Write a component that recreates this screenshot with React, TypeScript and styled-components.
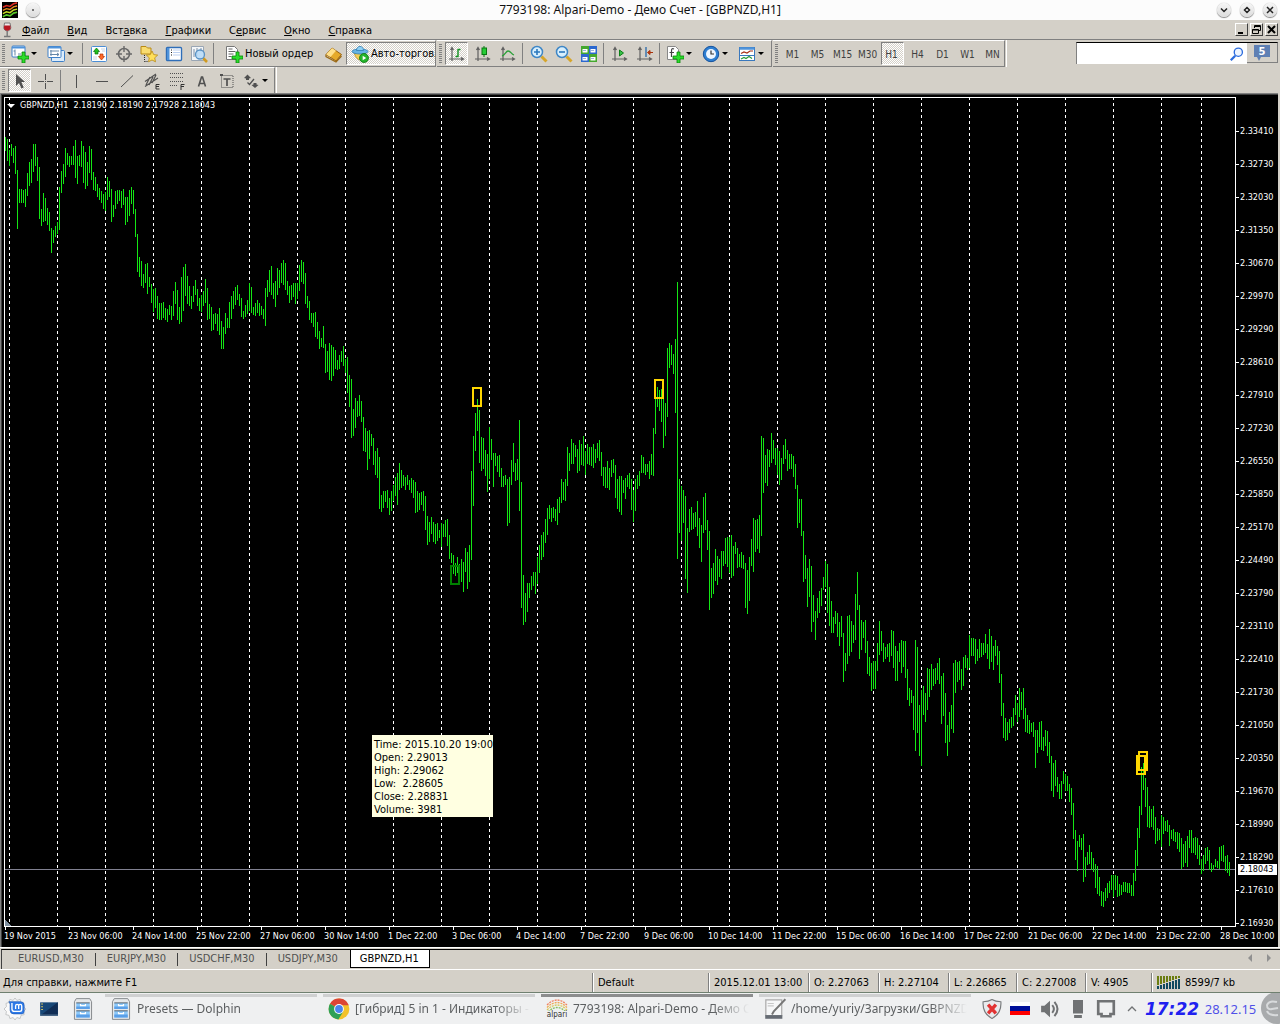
import React, { ReactNode } from "react";
import styled, { createGlobalStyle, css } from "styled-components";

const FACE = "#d4d0c8";
const SHADOW = "#808080";
const UI_FONT = '"DejaVu Sans Condensed", "DejaVu Sans", sans-serif';
const DESKTOP_FONT = '"Noto Sans", sans-serif';

const GlobalStyle = createGlobalStyle`
  * { box-sizing: border-box; }
  body { margin: 0; background: #000; }
  button, input { font: inherit; color: inherit; margin: 0; padding: 0; border: 0; background: none; }
  button { cursor: pointer; }
  svg { display: block; flex: none; }
`;

/* ---------- window frame ---------- */

const Screen = styled.div`
  display: flex;
  flex-direction: column;
  min-height: 100vh;
  font: 11px/14px ${UI_FONT};
  color: #000;
  background: ${FACE};
`;

const TitleBar = styled.header`
  display: grid;
  grid-template-columns: 1fr auto 1fr;
  align-items: center;
  height: 20px;
  background: #fcfcfc;
`;

const TitleSide = styled.div<{ $end?: boolean }>`
  display: flex;
  align-items: center;
  gap: ${(p) => (p.$end ? 9 : 8)}px;
  justify-content: ${(p) => (p.$end ? "flex-end" : "flex-start")};
  padding: 0 ${(p) => (p.$end ? 3 : 2)}px;
`;

const Title = styled.h1`
  margin: 0;
  font: 12px/20px ${DESKTOP_FONT};
  color: #111;
`;

const RoundButton = styled.button`
  display: grid;
  place-items: center;
  width: 14px;
  height: 14px;
  border-radius: 50%;
  background: linear-gradient(#f6f6f6, #dcdcdc);
  box-shadow: 0 1px 1px #888, 0 0 1px #999;
`;

const MenuBar = styled.nav`
  display: flex;
  align-items: center;
  height: 20px;
  padding: 0 2px 0 1px;
  border-bottom: 1px solid ${SHADOW};
`;

const MenuItem = styled.button`
  height: 19px;
  padding: 3px 9px 0;
  line-height: 16px;
`;

const MdiButtons = styled.div`
  display: flex;
  gap: 2px;
  margin-left: auto;
`;

const MdiButton = styled.button`
  display: grid;
  place-items: center;
  width: 13px;
  height: 13px;
  background: ${FACE};
  border: 1px solid;
  border-color: #fff #404040 #404040 #fff;
`;

/* ---------- toolbars ---------- */

const ToolRow = styled.div<{ $last?: boolean }>`
  display: flex;
  height: ${(p) => (p.$last ? 26 : 27)}px;
`;

const Band = styled.div<{ $width?: number; $last?: boolean }>`
  display: flex;
  align-items: center;
  flex: none;
  width: ${(p) => (p.$width ? p.$width + "px" : "auto")};
  overflow: hidden;
  border-top: 1px solid #fff;
  border-bottom: ${(p) => (p.$last ? 0 : 1)}px solid ${SHADOW};
  border-right: 1px solid ${SHADOW};
  margin-right: 1px;
`;

const RowFill = styled.div`
  flex: 1;
  display: flex;
  justify-content: flex-end;
  padding: 2px 2px 0 0;
  border-left: 1px solid #fff;
`;

const Grip = styled.span`
  flex: none;
  width: 3px;
  height: 19px;
  margin: 0 3px 0 2px;
  background: repeating-linear-gradient(#808080 0 1px, transparent 1px 2px);
`;

const Rule = styled.span`
  flex: none;
  width: 1px;
  height: 21px;
  margin: 0 3px 0 2px;
  background: ${SHADOW};
`;

const ToolButton = styled.button<{ $pressed?: boolean; $wide?: boolean }>`
  flex: none;
  display: flex;
  align-items: center;
  justify-content: center;
  gap: 2px;
  width: ${(p) => (p.$wide ? 36 : 25)}px;
  height: 23px;
  padding-right: ${(p) => (p.$wide ? 4 : 0)}px;
  border: 1px solid transparent;
  ${(p) =>
    p.$pressed &&
    css`
      width: 23px;
      margin: 0 2px 0 0;
      border-color: ${SHADOW} #fff #fff ${SHADOW};
      background: repeating-conic-gradient(#fff 0 25%, ${FACE} 0 50%) 0 0 / 2px 2px;
    `}
`;

const LabelButton = styled(ToolButton)<{ $size: number }>`
  justify-content: flex-start;
  width: ${(p) => p.$size}px;
  padding-left: ${(p) => (p.$pressed ? 4 : 7)}px;
  white-space: nowrap;
  overflow: hidden;
  margin-right: 0;
`;

const Period = styled(ToolButton)`
  padding: 2px 2px 0 0;
  font: 10px/14px ${UI_FONT};
  color: #404040;
`;

const Caret = styled.i`
  border: 3px solid transparent;
  border-top-color: #000;
  border-bottom: 0;
`;

const SearchBox = styled.label`
  display: flex;
  align-items: center;
  width: 171px;
  height: 22px;
  padding-right: 2px;
  background: #fff;
  border-top: 1px solid #000;
  border-left: 1px solid ${SHADOW};
`;

const SearchInput = styled.input`
  flex: 1;
  min-width: 0;
  padding: 0 4px;
  outline: 0;
`;

const ChatButton = styled.button`
  display: grid;
  place-items: center;
  width: 31px;
  height: 21px;
  border-top: 1px solid #000;
  border-right: 1px solid ${SHADOW};
  border-bottom: 1px solid ${SHADOW};
`;

/* ---------- chart ---------- */

const ChartWindow = styled.main`
  flex: 1;
  display: flex;
  flex-direction: column;
  margin-right: 2px;
  padding: 2px 0 0 2px;
  background: #000;
  border-top: 1px solid ${SHADOW};
  border-left: 1px solid ${SHADOW};
  box-shadow: inset 1px 1px #404040;
`;

const PlotRow = styled.div`
  flex: 1;
  display: flex;
  min-height: 600px;
  padding: 1px 0 0 1px;
`;

const Plot = styled.section`
  position: relative;
  flex: 1;
  min-width: 0;
  border: 1px solid #fff;
`;

const Drawing = styled.svg`
  position: absolute;
  inset: 0;
  width: 100%;
  height: 100%;
  shape-rendering: crispEdges;
`;

const Quote = styled.div`
  position: absolute;
  top: 2px;
  left: 2px;
  display: flex;
  align-items: center;
  gap: 5px;
  font: 9px/11px ${UI_FONT};
  white-space: pre;
  color: #fff;
`;

const QuoteMark = styled.i`
  border: 4px solid transparent;
  border-top-color: #fff;
  border-bottom: 0;
`;

const Hint = styled.div`
  position: absolute;
  top: 637px;
  left: 367px;
  padding: 3px 0 1px 2px;
  background: #ffffe1;
  font: 11px/13px ${UI_FONT};
  white-space: pre;
`;

const PriceAxis = styled.div`
  position: relative;
  flex: none;
  width: 42px;
  padding-top: 18px;
  margin-bottom: -13px;
  font: 9px/33px ${UI_FONT};
  color: #fff;
`;

const Price = styled.div`
  display: flex;
  align-items: center;
  gap: 1px;
  height: 33px;
  &::before { content: ""; width: 3px; height: 1px; background: #fff; }
`;

const LastPrice = styled.div`
  position: absolute;
  top: 767px;
  left: 2px;
  width: 39px;
  padding-left: 2px;
  background: #fff;
  color: #000;
  line-height: 11px;
`;

const TimeAxis = styled.div`
  display: flex;
  height: 20px;
  padding-left: 1px;
  overflow: hidden;
`;

const Moment = styled.div`
  flex: none;
  width: 64px;
  font: 9px/13px ${UI_FONT};
  color: #fff;
  white-space: nowrap;
  &::before { content: ""; display: block; width: 1px; height: 3px; margin-left: 1px; background: #fff; }
`;

/* ---------- tabs and status ---------- */

const TabStrip = styled.div`
  display: flex;
  height: 23px;
  border-top: 1px solid #fff;
  border-bottom: 1px solid #fff;
`;

const Tabs = styled.div`
  display: flex;
  flex: 1;
  margin: 1px 0 0 1px;
  padding-left: 5px;
  border-top: 1px solid #000;
  border-left: 1px solid #404040;
`;

const Tab = styled.button<{ $active?: boolean; $ruled?: boolean }>`
  position: relative;
  height: 18px;
  padding: 0 12px 0 11px;
  color: #505050;
  ${(p) =>
    p.$ruled &&
    css`
      &::after { content: ""; position: absolute; right: 0; top: 3px; width: 1px; height: 13px; background: #404040; }
    `}
  ${(p) =>
    p.$active &&
    css`
      padding: 0 10px 0 9px;
      color: #000;
      background: #fff;
      border: 1px solid #000;
      border-top: 0;
    `}
`;

const TabArrows = styled.div`
  display: flex;
  align-items: center;
  gap: 15px;
  margin-left: auto;
  padding: 0 9px 3px 0;
`;

const Arrow = styled.button<{ $left?: boolean }>`
  border: 4px solid transparent;
  border-${(p) => (p.$left ? "right" : "left")}-color: #909090;
  border-${(p) => (p.$left ? "left" : "right")}: 0;
`;

const StatusBar = styled.footer`
  display: flex;
  align-items: stretch;
  height: 23px;
  padding-top: 3px;
  border-bottom: 1px solid #6f8070;
`;

const StatusText = styled.div`
  flex: 1;
  padding-left: 3px;
  line-height: 20px;
  white-space: nowrap;
`;

const StatusCell = styled.div<{ $width: number }>`
  flex: none;
  display: flex;
  align-items: center;
  gap: 4px;
  width: ${(p) => p.$width}px;
  padding-left: 5px;
  line-height: 20px;
  border-left: 1px solid ${SHADOW};
  box-shadow: inset 1px 0 #fff;
`;

/* ---------- desktop panel ---------- */

const Panel = styled.footer`
  display: flex;
  height: 31px;
  background: #eff0f1;
  font: 12px/20px ${DESKTOP_FONT};
  color: #5c5f61;
`;

const Launchers = styled.div`
  display: flex;
  align-items: center;
  gap: 12px;
  width: 105px;
  padding-left: 4px;
  flex: none;
`;

const Launcher = styled.button`
  display: grid;
  place-items: center;
  width: 22px;
  height: 22px;
`;

const Tasks = styled.div`
  flex: 1;
  display: flex;
  gap: 6px;
  min-width: 0;
  margin-right: 9px;
`;

const Task = styled.button<{ $active?: boolean }>`
  flex: 1;
  min-width: 0;
  display: flex;
  align-items: center;
  gap: 5px;
  margin-top: 1px;
  padding: 0 0 3px 5px;
  border-top: 3px solid ${(p) => (p.$active ? "#8c8d8e" : "#cfd0d1")};
`;

const TaskName = styled.span`
  flex: 1;
  overflow: hidden;
  text-align: left;
  white-space: nowrap;
  mask-image: linear-gradient(90deg, #000 calc(100% - 40px), transparent calc(100% - 4px));
`;

const Tray = styled.div`
  flex: none;
  display: grid;
  grid-template-columns: 24px 32px 28px 27px 30px 22px 58px 59px 20px;
  align-items: center;
  justify-items: center;
`;

const Clock = styled.time`
  font: italic bold 17px/24px "DejaVu Sans", sans-serif;
  color: #2020f0;
`;

const Today = styled.time`
  font-size: 13px;
  color: #5050e8;
`;

/* ---------- icons ---------- */

const Svg = ({ size = 18, children }: { size?: number; children: ReactNode }) => (
  <svg width={size} height={size} viewBox="0 0 18 18" fill="none" aria-hidden="true">
    {children}
  </svg>
);

const Plus = () => (
  <path d="M11 7h3v4h4v3h-4v4h-3v-4H7v-3h4z" fill="#2bdc2b" stroke="#078307" strokeWidth=".8" />
);

const AxesGlyph = () => (
  <path d="M4 3v13M1 14h14M2.500 5L4 2.500 5.500 5M13 12.500l2.500 1.500L13 15.500" stroke="#606060" strokeWidth="1.200" />
);

const ICONS: Record<string, ReactNode> = {
  newChart: (
    <>
      <rect x="1" y="1" width="13" height="11" rx="1" fill="#fff" stroke="#3f80c8" />
      <path d="M1 2.500h13" stroke="#4f93da" strokeWidth="2" />
      <path d="M4 4.500v6M2.500 6H4M7 9h3" stroke="#6688aa" />
      <Plus />
    </>
  ),
  profiles: (
    <>
      <rect x="4.500" y="5.500" width="13" height="11" rx="1" fill="#dcecfb" stroke="#3f80c8" />
      <rect x="1" y="1.500" width="13" height="11" rx="1" fill="#fff" stroke="#3f80c8" />
      <path d="M1 2.500h13" stroke="#4f93da" strokeWidth="2" />
      <path d="M4 5v6M3 9.500h9M10 8l2 1.500L10 11M3 6h9" stroke="#6688aa" />
    </>
  ),
  market: (
    <>
      <rect x="1.500" y="1.500" width="15" height="15" rx="1" fill="#fff" stroke="#4b8ed6" />
      <path d="M11 4h4M12 6h3M3 12h4M3 14h4" stroke="#c8d4e4" />
      <path d="M6.500 3l3 3.500H8v2.500H5V6.500H3.500z" fill="#1fc01f" stroke="#087008" strokeWidth=".7" />
      <path d="M11.500 15l-3-3.500H10V9h3v2.500h1.500z" fill="#ff6a2a" stroke="#b43000" strokeWidth=".7" />
    </>
  ),
  crosshair: (
    <>
      <circle cx="9" cy="9" r="5.500" stroke="#686868" strokeWidth="1.600" />
      <path d="M9 1v6M9 11v6M1 9h6M11 9h6" stroke="#686868" strokeWidth="1.400" />
    </>
  ),
  navigator: (
    <>
      <path d="M1 3V1.500h5L7.500 3H11v6H1z" fill="#f9dc70" stroke="#b98a15" />
      <path d="M4.500 10v6.500M4.500 16.500h4" stroke="#222" strokeDasharray="1 1" />
      <path d="M12 6l1.700 3.600 4 .5-3 2.700.8 4L12 15l-3.500 1.800.8-4-3-2.700 4-.5z" fill="#ffe05a" stroke="#b98a15" strokeWidth=".8" />
    </>
  ),
  dataWindow: (
    <>
      <rect x="1.500" y="2.500" width="15" height="13" rx="1" fill="#fff" stroke="#2f6eb8" strokeWidth="1.400" />
      <path d="M2 3h2.500v12H2z" fill="#4f93da" />
      <path d="M8 5h7M8 7.500h7M8 10h7" stroke="#bcd0f0" />
      <path d="M6 5h1M6 7.500h1M6 10h1" stroke="#202020" />
    </>
  ),
  tester: (
    <>
      <path d="M1.500 1.500h12v14h-12z" fill="#f4f6f8" stroke="#9aa6b4" />
      <path d="M4 4v8M7 3v8M11 3v4" stroke="#7d8fa6" />
      <path d="M13 13l4 4" stroke="#d09a20" strokeWidth="2.600" />
      <circle cx="10" cy="9.500" r="4.500" fill="#b9dcf7" fillOpacity=".9" stroke="#5a92c4" strokeWidth="1.300" />
    </>
  ),
  order: (
    <>
      <path d="M1.500 1.500h8l3 3v10h-11z" fill="#fff" stroke="#777" />
      <path d="M3.500 4h4M3.500 6.500h7M3.500 9h5M3.500 11.500h3" stroke="#666" />
      <Plus />
    </>
  ),
  book: (
    <>
      <path d="M1 9.500L7 3l9.500 6.500L11 16z" fill="#e5aa2a" stroke="#966010" />
      <path d="M1 9.500L7 3l4 2.700L5.500 12z" fill="#ffe08a" />
      <path d="M1 9.500v2L11 17l5.500-6" stroke="#9c6a14" strokeWidth="1.300" />
    </>
  ),
  expert: (
    <>
      <path d="M3 7c2 9 9 12 12 0z" fill="#f6cf52" stroke="#b58818" strokeWidth=".8" />
      <ellipse cx="9" cy="6.500" rx="8" ry="2.500" fill="#66b4e4" stroke="#2d7cb4" strokeWidth=".8" />
      <path d="M5.500 5.500C5.500 0 12.500 0 12.500 5.500z" fill="#8fd0f4" stroke="#2d7cb4" strokeWidth=".8" />
      <circle cx="13" cy="13" r="4.500" fill="#25b52c" stroke="#0b7a12" strokeWidth=".8" />
      <path d="M11.700 10.700l3.500 2.300-3.500 2.300z" fill="#fff" />
    </>
  ),
  bars: (
    <>
      <AxesGlyph />
      <path d="M7.500 11.500H10M10 4v8M10 4.500h2.500" stroke="#119020" strokeWidth="1.400" />
    </>
  ),
  candles: (
    <>
      <AxesGlyph />
      <path d="M10 1v11" stroke="#087810" />
      <rect x="8" y="3" width="4.500" height="6.500" fill="#25cc35" stroke="#087810" />
    </>
  ),
  line: (
    <>
      <AxesGlyph />
      <path d="M3 11c3-1 4-5 6-5 3 0 3 3 6 4" stroke="#2aa038" strokeWidth="1.300" />
    </>
  ),
  zoomIn: (
    <>
      <path d="M11.500 11.500l5 5" stroke="#d6a52a" strokeWidth="3" />
      <circle cx="7" cy="7" r="5.500" fill="#d8effd" stroke="#3e86c6" strokeWidth="1.500" />
      <path d="M7 4v6M4 7h6" stroke="#2b78bd" strokeWidth="1.600" />
    </>
  ),
  zoomOut: (
    <>
      <path d="M11.500 11.500l5 5" stroke="#d6a52a" strokeWidth="3" />
      <circle cx="7" cy="7" r="5.500" fill="#d8effd" stroke="#3e86c6" strokeWidth="1.500" />
      <path d="M4 7h6" stroke="#2b78bd" strokeWidth="1.600" />
    </>
  ),
  tile: (
    <>
      <path d="M1 1h8v8H1zM9 9h8v8H9z" fill="#45a82e" />
      <path d="M9 1h8v8H9z" fill="#2c68cf" />
      <path d="M1 9h8v8H1z" fill="#2c68cf" />
      <path d="M2.500 4h5v3.500h-5zM10.500 4h5v3.500h-5zM2.500 12h5v3.500h-5zM10.500 12h5v3.500h-5z" fill="#fff" />
      <path d="M3 5.500h3M11 5.500h3M3 13.500h3M11 13.500h3" stroke="#9ab4dc" />
    </>
  ),
  scroll: (
    <>
      <AxesGlyph />
      <path d="M8.500 5l4 3-4 3z" fill="#38c048" stroke="#0b8018" />
    </>
  ),
  shift: (
    <>
      <AxesGlyph />
      <path d="M10 2v10" stroke="#2868a8" strokeWidth="1.300" />
      <path d="M11.500 7.500l2.500-2v4zM14 7.500h3" fill="#c84010" stroke="#a83008" />
    </>
  ),
  indicators: (
    <>
      <path d="M1.500 1.500h8l3 3v10h-11z" fill="#fff" stroke="#888" />
      <path d="M8 4c-2-1-2.500 0-2.500 2v6M3.500 7.500H8" stroke="#444" strokeWidth="1.200" />
      <Plus />
    </>
  ),
  clock: (
    <>
      <circle cx="9" cy="9" r="7.700" fill="#2e7fd2" stroke="#14519c" />
      <circle cx="9" cy="9" r="5" fill="#eef6ff" />
      <path d="M9 5.500V9h3" stroke="#333" strokeWidth="1.200" />
    </>
  ),
  template: (
    <>
      <rect x="1.500" y="2.500" width="15" height="13" fill="#fff" stroke="#3a78bd" />
      <path d="M1.500 3.500h15" stroke="#4f93da" strokeWidth="2.500" />
      <path d="M3 8.500l3-1.500 3 1 3-2h3" stroke="#a83018" strokeWidth="1.200" />
      <path d="M2 10.500h14" stroke="#3a78bd" />
      <path d="M3 14l3-1.500 2 1 3-2 3 2" stroke="#2a9a3a" strokeWidth="1.200" />
    </>
  ),
  cursor: <path d="M5 2v12l3-3 2.500 5.500 2.200-1L10.300 10H14z" fill="#505050" />,
  cross: <path d="M8.500 2v6M8.500 11v6M1 9.500h6M10 9.500h6M8 9.500h1" stroke="#505050" />,
  vline: <path d="M8.500 3v13" stroke="#505050" />,
  hline: <path d="M3 9.500h12" stroke="#505050" />,
  trend: <path d="M3 15L15 3.500" stroke="#505050" />,
  channel: (
    <>
      <path d="M2 9.500L13 2M2 14.500L15 6M3 13L7 5M6 13l4-8M9 11l4-8" stroke="#505050" strokeWidth="1.200" />
      <path d="M16.500 12.500H13v4.500h3.500M13 14.500h3" stroke="#303030" />
    </>
  ),
  fibo: (
    <>
      <path d="M2 1.500h14M2 5.500h14M2 9.500h14M2 13.500h8" stroke="#505050" strokeDasharray="1 1" />
      <path d="M16.500 12.500H13V18M13 14.500h3" stroke="#303030" />
    </>
  ),
  text: <path d="M5.500 14.500L8.500 5h1l3 9.500M6.500 11.500h5" stroke="#505050" strokeWidth="1.600" />,
  label: (
    <>
      <path d="M3.500 3.500h11.500v12H3.500z" stroke="#505050" strokeDasharray="1 1" />
      <path d="M2 2h3v2H2z" fill="#505050" />
      <path d="M5.500 7h7M9 7v7" stroke="#505050" strokeWidth="1.700" />
    </>
  ),
  shapes: (
    <>
      <path d="M5.500 2.500L9 6 7 6.500V8H4V6.500L2 6zM13 16l-3.500-3 2-.5v-1.500h3v1.500l2 .5z" fill="#505050" />
      <path d="M5.500 10.500l2 2L12 7" stroke="#505050" strokeWidth="1.300" />
    </>
  ),
  search: (
    <>
      <path d="M2 16l5-5" stroke="#2b6bdd" strokeWidth="2.600" />
      <circle cx="10.500" cy="7" r="4.600" fill="#eef5ff" stroke="#2b6bdd" strokeWidth="1.500" />
    </>
  ),
  logo: (
    <>
      <path d="M0 0h18v18H0z" fill="#000" />
      <path d="M1 6l4-2 4 1 4-3 4-1" stroke="#d82a20" strokeWidth="1.800" />
      <path d="M1 9.500l4-2 4 1 4-3 4-1" stroke="#e88a20" strokeWidth="1.600" />
      <path d="M1 13l4-2 4 1 4-3 4-1" stroke="#c8dc28" strokeWidth="1.600" />
      <path d="M1 16.500l4-2 4 1 4-3 4-1" stroke="#58c828" strokeWidth="1.800" />
    </>
  ),
  mint: (
    <>
      <path d="M9 0l1.500 2 2.700-.8.700 2.500 2.500.7-.8 2.600L18 9l-2 2 .5 2.600-2.600.6-.7 2.600-2.700-.8L9 18l-1.500-2-2.700.8-.7-2.600-2.600-.6L2 11 0 9l2-2-.4-2.600L4 3.700l.8-2.500 2.700.8z" fill="#fafafa" stroke="#b4b6b8" strokeWidth=".6" />
      <path d="M4 3h9.500a3 3 0 013 3v5a2 2 0 01-2 2H8a3 3 0 01-3-3V5z" fill="#2f7be8" stroke="#1550b0" strokeWidth=".5" />
      <path d="M6.500 4v5a2 2 0 002 2H13a1.500 1.500 0 001.500-1.500V6.500a1 1 0 00-2.500 0V9m0-2.500a1 1 0 00-2.500 0V9" stroke="#fff" strokeWidth="1.100" />
    </>
  ),
  desktop: (
    <>
      <path d="M1 3h16v12H1z" fill="#184878" />
      <path d="M1 15L17 3v12z" fill="#102d55" />
      <path d="M2 4.500h1.500M2 7h1.500M2 9.500h1.500" stroke="#e8d060" />
      <path d="M1 14.500h16" stroke="#5a7a98" />
    </>
  ),
  drawer: (
    <>
      <path d="M3.500.5h11l1.500 2.500v14.500H2V3z" fill="#e6e8ea" stroke="#86898c" strokeWidth=".8" />
      <path d="M3.500 4h11v5h-11zM3.500 10.500h11V16h-11z" fill="#8cc8fa" />
      <path d="M3.500 7h11v2h-11zM3.500 13.500h11V16h-11z" fill="#5a9fe8" />
      <path d="M3.500 4h11M3.500 10.500h11" stroke="#56616c" strokeWidth=".8" />
      <path d="M7 5v1.200h4V5M7 11.500v1.200h4v-1.200" stroke="#fff" />
    </>
  ),
  chrome: (
    <>
      <circle cx="9" cy="9" r="8.500" fill="#f2c22b" />
      <path d="M9 9L1.600 4.800A8.500 8.500 0 0117 6H9z" fill="#dc4535" />
      <path d="M9 9L1.600 4.800A8.500 8.500 0 008.500 17.500l4-6.500z" fill="#2fa056" />
      <circle cx="9" cy="9" r="4" fill="#fff" />
      <circle cx="9" cy="9" r="3.200" fill="#4a85ee" />
    </>
  ),
  editor: (
    <>
      <path d="M1.500 1.500h13v13h-13z" fill="#f6f7f8" stroke="#aaa" />
      <path d="M1 14h14v3H1z" fill="#666c74" />
      <path d="M3 4.500h5M3 6.500h5" stroke="#c8c8c8" />
      <path d="M17.500 1L8 11l-1.500 2.500" stroke="#777" strokeWidth="1.600" />
    </>
  ),
  shield: (
    <>
      <path d="M9 .5c3 2 5 2 8 2 .5 7-2 12-8 15-6-3-8.500-8-8-15 3 0 5 0 8-2z" fill="#e9eaec" stroke="#77797b" />
      <path d="M5.500 5l7 8M12.500 5l-7 8" stroke="#e23333" strokeWidth="3" />
    </>
  ),
  volume: (
    <>
      <path d="M1 6h3l5-4.500v15L4 12H1z" fill="#707274" />
      <path d="M11 5.500q3 3.500 0 7M13 2.500q5.500 6.500 0 13" stroke="#707274" strokeWidth="1.800" />
    </>
  ),
  device: <path d="M4.500 1h9v12h-9zM5.500 14.500h7V17h-7z" fill="#707274" />,
  screen: <path d="M2 2h14v11.500h-3v2H5v-2H2z" stroke="#707274" strokeWidth="2.400" />,
  up: <path d="M5 11l4-4 4 4" stroke="#707274" strokeWidth="1.300" />,
};

const Icon = ({ name, size }: { name: string; size?: number }) => <Svg size={size}>{ICONS[name]}</Svg>;

const WineIcon = () => (
  <svg width="12" height="16" viewBox="0 0 12 16" fill="none" aria-hidden="true">
    <path d="M3.500 1h5.500l.8 4.500c0 4.500-7 4.500-7 0z" fill="#f0e8e8" stroke="#777" />
    <path d="M3.200 3.500h6.100l.4 2.500c-.6 3.500-6.200 3.500-6.800 0z" fill="#b81822" />
    <path d="M6.200 9v5M3 14.500h6.500" stroke="#777" strokeWidth="1.400" />
  </svg>
);

const AlpariIcon = styled.span`
  display: flex;
  flex-direction: column;
  align-items: center;
  width: 22px;
  font: 8px/8px "DejaVu Sans Condensed", sans-serif;
  color: #333;
`;

const Tool = ({ name, title, wide, pressed }: { name: string; title: string; wide?: boolean; pressed?: boolean }) => (
  <ToolButton aria-label={title} $wide={wide} $pressed={pressed}>
    <Icon name={name} />
    {wide && <Caret />}
  </ToolButton>
);

/* ---------- chart data ---------- */

/* High and low of each hourly bar, in plot pixels. */
const BARS = `
137-151 139-161 150-166 144-156 148-163 146-174 170-229 189-203 189-203 190-203 189-207 173-196 162-186 159-183 144-172
144-166 157-181 167-219 209-226 193-222 198-221 208-225 212-231 228-253 230-243 226-237 222-234 187-230 171-193 164-184
148-177 153-165 156-167 156-165 146-165 140-178 156-184 155-166 141-167 146-183 152-189 162-186 146-173 149-180 172-190
177-191 184-197 188-200 191-203 194-209 192-211 177-200 181-197 189-222 205-217 191-209 190-204 190-201 191-208 189-205
197-225 197-222 190-216 187-204 190-214 209-237 234-272 257-277 261-286 274-288 264-283 263-294 277-287 284-303 289-312
288-308 296-319 303-320 303-320 302-318 308-320 309-322 305-315 306-320 291-316 282-304 290-320 307-324 277-322 267-311
264-296 276-304 286-306 296-309 286-302 280-295 289-306 298-311 295-312 291-306 279-303 288-320 304-319 307-331 314-330
313-324 314-331 308-335 321-349 327-349 313-334 318-328 302-328 296-319 291-309 287-305 285-300 294-306 298-317 311-319
305-317 300-314 283-311 287-313 307-315 303-316 300-313 303-316 306-315 309-319 288-326 280-297 270-292 266-295 283-299
281-307 268-295 270-288 263-283 260-285 263-290 281-295 286-303 285-300 283-297 283-304 283-299 265-291 260-282 262-284
273-304 296-308 301-320 313-323 313-327 312-337 322-339 331-349 338-347 326-348 344-373 351-372 343-380 345-381 347-376
350-369 360-370 355-369 351-362 346-366 359-373 357-393 375-407 379-438 409-436 398-428 401-417 395-416 401-422 417-451
428-452 431-470 430-459 434-446 438-465 451-475 448-478 457-509 495-512 491-508 491-502 490-508 498-515 491-511 485-501
477-496 473-505 463-490 470-488 475-486 477-490 475-485 480-490 478-493 480-498 482-513 491-512 493-510 492-505 491-511
496-530 516-545 522-542 517-534 522-542 524-544 523-541 530-538 523-547 524-537 520-537 519-546 535-559 553-563 555-574
563-576 557-573 564-584 559-582 562-592 548-572 552-589 545-582 471-560 436-506 413-451 399-431 410-463 437-471 438-469
450-476 454-492 427-479 439-460 453-487 453-466 456-472 455-477 468-487 476-487 475-485 479-526 477-523 460-485 443-472
463-481 459-480 420-511 482-608 575-625 593-622 583-612 583-598 576-590 572-586 572-594 557-584 545-573 535-560 532-557
519-543 508-535 505-519 508-522 507-518 509-521 499-525 497-513 479-503 482-500 479-501 447-486 453-471 439-464 443-464
445-457 449-473 440-471 444-465 436-466 451-475 444-464 447-465 447-466 444-468 449-463 443-458 440-461 452-476 467-486
467-488 461-488 468-490 460-477 459-473 465-498 479-509 476-512 476-515 480-493 478-499 475-487 473-489 479-510 490-522
479-511 475-489 471-486 455-473 457-473 464-475 464-472 461-479 454-475 428-476 398-434 387-407 390-411 389-422 399-448
403-436 348-417 343-368 345-365 354-374 339-413 282-559 479-533 486-541 490-523 496-579 528-593 509-532 507-530 513-529
512-527 501-536 518-548 525-562 497-533 493-530 520-550 531-610 568-598 563-594 549-581 556-585 559-577 551-579 551-566
538-564 537-567 537-573 535-578 546-576 542-554 548-568 554-567 552-568 555-569 563-608 570-614 557-601 539-566 518-572
520-552 519-549 515-553 436-536 438-493 455-483 449-486 450-467 433-463 440-459 448-465 448-475 451-485 458-480 445-464
439-459 450-471 454-469 454-469 456-477 464-489 485-528 499-523 499-536 531-582 555-579 568-607 559-597 566-632 595-622
611-640 598-618 591-613 588-606 577-590 561-587 564-613 587-626 601-633 617-633 611-624 613-637 622-646 616-637 633-682
653-671 616-664 615-656 621-652 625-643 594-640 572-610 605-659 620-650 622-638 620-653 641-674 657-676 663-691 661-689
661-689 643-671 621-655 631-651 643-662 647-659 644-657 643-662 630-656 631-668 646-681 651-681 643-662 640-673 641-667
641-678 669-700 688-706 690-703 696-730 640-751 647-733 705-756 690-766 686-715 693-722 668-710 669-697 664-690 669-686
668-684 663-680 658-684 676-724 673-716 693-743 725-756 712-742 705-729 663-733 660-693 662-682 661-680 669-690 657-686
655-668 658-670 635-668 638-656 638-656 639-664 649-661 639-658 643-657 643-655 634-653 644-659 629-669 636-662 646-670
640-656 646-665 651-683 674-716 703-738 718-741 722-740 719-733 717-728 708-726 695-715 703-722 688-717 692-710 688-719
708-732 715-733 720-734 723-732 722-737 730-768 730-753 722-747 721-750 737-751 730-746 731-756 742-763 756-791 763-797
760-786 777-792 784-799 781-799 771-784 774-791 776-791 784-802 788-815 803-839 830-860 841-871 835-847 838-850 834-882
857-877 852-865 845-864 852-870 858-872 864-888 866-894 877-896 891-906 892-907 888-901 883-898 881-893 875-890 875-897
875-890 876-897 884-896 885-895 882-892 882-892 883-893 883-893 885-896 873-896 850-881 828-866 806-838 767-815 763-790
778-807 787-827 806-828 809-827 806-830 817-844 828-841 829-840 815-847 817-834 821-831 820-832 825-846 830-839 829-841
832-842 832-849 833-852 838-869 844-867 841-863 836-867 830-848 830-853 838-853 837-855 838-859 845-865 859-874 855-871
848-864 847-861 850-870 863-872 865-870 859-867 861-868 847-869 846-861 845-862 856-871 855-873 862-876
`;

const barPath = BARS.trim()
  .split(/\s+/)
  .map((bar, i) => {
    const [high, low] = bar.split("-").map(Number);
    return `M${5.5 + i * 2} ${high}V${low}`;
  })
  .join("");

const DAYS = [...Array.from({ length: 25 }, (_, i) => 9 + i * 48), 1201];

const MARKS = [
  { x: 473, y: 388, color: "#ffd700" },
  { x: 655, y: 380, color: "#ffd700" },
  { x: 451, y: 566, color: "#008000" },
  { x: 1137, y: 756, color: "#ffd700" },
  { x: 1139, y: 752, color: "#ffd700" },
];

const PRICES =
  "2.33410 2.32730 2.32030 2.31350 2.30670 2.29970 2.29290 2.28610 2.27910 2.27230 2.26550 2.25850 2.25170 2.24490 2.23790 2.23110 2.22410 2.21730 2.21050 2.20350 2.19670 2.18990 2.18290 2.17610 2.16930".split(
    " "
  );

const MOMENTS = [
  "19 Nov 2015", "23 Nov 06:00", "24 Nov 14:00", "25 Nov 22:00", "27 Nov 06:00", "30 Nov 14:00", "1 Dec 22:00",
  "3 Dec 06:00", "4 Dec 14:00", "7 Dec 22:00", "9 Dec 06:00", "10 Dec 14:00", "11 Dec 22:00", "15 Dec 06:00",
  "16 Dec 14:00", "17 Dec 22:00", "21 Dec 06:00", "22 Dec 14:00", "23 Dec 22:00", "28 Dec 10:00",
];

const MENU = [
  ["", "Ф", "айл"], ["", "В", "ид"], ["Вст", "а", "вка"], ["", "Г", "рафики"],
  ["С", "е", "рвис"], ["", "О", "кно"], ["", "С", "правка"],
];

const PERIODS = ["M1", "M5", "M15", "M30", "H1", "H4", "D1", "W1", "MN"];
const CHARTS = ["EURUSD,M30", "EURJPY,M30", "USDCHF,M30", "USDJPY,M30", "GBPNZD,H1"];

const STATUS: [string, number][] = [
  ["Default", 116], ["2015.12.01 13:00", 100], ["O: 2.27063", 70], ["H: 2.27104", 70],
  ["L: 2.26865", 68], ["C: 2.27008", 69], ["V: 4905", 66],
];

const Chart = () => (
  <ChartWindow>
    <PlotRow>
      <Plot>
        <Drawing>
          <g transform="translate(-5 -98)">
            {DAYS.map((x) => (
              <line key={x} x1={x + 0.5} x2={x + 0.5} y1="97" y2="926" stroke="#fff" strokeDasharray="3 3" />
            ))}
            <path d="M5 869.5H1235" stroke="#808090" />
            <path d={barPath} stroke="#14e614" />
            {MARKS.map((m) => (
              <rect key={m.x} x={m.x} y={m.y} width="8" height="18" fill="none" stroke={m.color} strokeWidth="2" />
            ))}
            <path d="M5 919v7h6z" fill="#8090a0" />
          </g>
        </Drawing>
        <Quote>
          <QuoteMark />
          {"GBPNZD,H1  2.18190 2.18190 2.17928 2.18043"}
        </Quote>
        <Hint>
          {"Time: 2015.10.20 19:00\nOpen: 2.29013\nHigh: 2.29062\nLow:  2.28605\nClose: 2.28831\nVolume: 3981"}
        </Hint>
      </Plot>
      <PriceAxis>
        {PRICES.map((p) => (
          <Price key={p}>{p}</Price>
        ))}
        <LastPrice>2.18043</LastPrice>
      </PriceAxis>
    </PlotRow>
    <TimeAxis>
      {MOMENTS.map((m) => (
        <Moment key={m}>{m}</Moment>
      ))}
    </TimeAxis>
  </ChartWindow>
);

export default function App() {
  return (
    <Screen>
      <GlobalStyle />
      <TitleBar>
        <TitleSide>
          <Icon name="logo" size={16} />
          <RoundButton aria-label="Меню окна">
            <svg width="2" height="2"><path d="M0 0h2v2H0z" fill="#777" /></svg>
          </RoundButton>
        </TitleSide>
        <Title>7793198: Alpari-Demo - Демо Счет - [GBPNZD,H1]</Title>
        <TitleSide $end>
          <RoundButton aria-label="Свернуть">
            <svg width="8" height="8" fill="none" stroke="#222" strokeWidth="1.500"><path d="M1 2.500l3 3 3-3" /></svg>
          </RoundButton>
          <RoundButton aria-label="Развернуть">
            <svg width="8" height="8" fill="none" stroke="#222" strokeWidth="1.500"><path d="M4 1.500L6.500 4 4 6.500 1.500 4z" /></svg>
          </RoundButton>
          <RoundButton aria-label="Закрыть">
            <svg width="8" height="8" fill="none" stroke="#222" strokeWidth="1.500"><path d="M1 1l6 6M7 1L1 7" /></svg>
          </RoundButton>
        </TitleSide>
      </TitleBar>

      <MenuBar>
        <WineIcon />
        {MENU.map(([before, key, after]) => (
          <MenuItem key={after}>
            {before}<u>{key}</u>{after}
          </MenuItem>
        ))}
        <MdiButtons>
          <MdiButton aria-label="Свернуть график">
            <svg width="9" height="9"><path d="M1 7h5v2H1z" /></svg>
          </MdiButton>
          <MdiButton aria-label="Восстановить график">
            <svg width="9" height="9" fill="none" stroke="#000"><path d="M2.500 3V.5h6v5H6.500M.5 4.500h6v4h-6zM2.500 1.500h6M.5 5h6" /></svg>
          </MdiButton>
          <MdiButton aria-label="Закрыть график">
            <svg width="9" height="9" stroke="#000" strokeWidth="2"><path d="M1 1l7 7M8 1L1 8" /></svg>
          </MdiButton>
        </MdiButtons>
      </MenuBar>

      <ToolRow>
        <Band $width={436}>
          <Grip />
          <Tool name="newChart" title="Новый график" wide />
          <Tool name="profiles" title="Профили" wide />
          <Rule />
          <Tool name="market" title="Обзор рынка" />
          <Tool name="crosshair" title="Окно данных" />
          <Tool name="navigator" title="Навигатор" />
          <Tool name="dataWindow" title="Терминал" />
          <Tool name="tester" title="Тестер стратегий" />
          <Rule />
          <LabelButton $size={104}>
            <Icon name="order" />Новый ордер
          </LabelButton>
          <Tool name="book" title="MetaEditor" />
          <LabelButton $size={110} $pressed>
            <Icon name="expert" />Авто-торговля
          </LabelButton>
        </Band>
        <Band>
          <Grip />
          <Tool name="bars" title="Бары" pressed />
          <Tool name="candles" title="Свечи" />
          <Tool name="line" title="Линия" />
          <Rule />
          <Tool name="zoomIn" title="Увеличить" />
          <Tool name="zoomOut" title="Уменьшить" />
          <Tool name="tile" title="Расположить окна" />
          <Rule />
          <Tool name="scroll" title="Автопрокрутка" />
          <Tool name="shift" title="Сдвиг графика" />
          <Rule />
          <Tool name="indicators" title="Индикаторы" wide />
          <Tool name="clock" title="Периоды" wide />
          <Tool name="template" title="Шаблоны" wide />
        </Band>
        <Band $width={232}>
          <Grip />
          {PERIODS.map((p) => (
            <Period key={p} $pressed={p === "H1"}>{p}</Period>
          ))}
        </Band>
        <RowFill>
          <SearchBox>
            <SearchInput type="text" aria-label="Поиск" />
            <Icon name="search" size={16} />
          </SearchBox>
          <ChatButton aria-label="Сообщения: 5">
            <svg width="16" height="17" viewBox="0 0 16 17">
              <path d="M0 1h16v12H7l-2 4-2-4H0z" fill="#5f80b4" />
              <text x="8" y="11" textAnchor="middle" fill="#fff" fontFamily="DejaVu Sans" fontSize="10" fontWeight="700">5</text>
            </svg>
          </ChatButton>
        </RowFill>
      </ToolRow>

      <ToolRow $last>
        <Band $last $width={275}>
          <Grip />
          <Tool name="cursor" title="Курсор" pressed />
          <Tool name="cross" title="Перекрестие" />
          <Rule />
          <Tool name="vline" title="Вертикальная линия" />
          <Tool name="hline" title="Горизонтальная линия" />
          <Tool name="trend" title="Трендовая линия" />
          <Tool name="channel" title="Канал" />
          <Tool name="fibo" title="Фибоначчи" />
          <Tool name="text" title="Текст" />
          <Tool name="label" title="Метка" />
          <Tool name="shapes" title="Стрелки" wide />
        </Band>
        <RowFill />
      </ToolRow>

      <Chart />

      <TabStrip>
        <Tabs>
          {CHARTS.map((c, i) => (
            <Tab key={c} $active={i === 4} $ruled={i < 3}>{c}</Tab>
          ))}
          <TabArrows>
            <Arrow $left aria-label="Назад" />
            <Arrow aria-label="Вперед" />
          </TabArrows>
        </Tabs>
      </TabStrip>

      <StatusBar>
        <StatusText>Для справки, нажмите F1</StatusText>
        {STATUS.map(([text, width]) => (
          <StatusCell key={text} $width={width}>{text}</StatusCell>
        ))}
        <StatusCell $width={129}>
          <svg width="24" height="13" shapeRendering="crispEdges">
            {Array.from({ length: 8 }, (_, i) => (
              <g key={i}>
                <path d={`M${i * 3} 0h2v${9 - i}h-2z`} fill="#6b7d10" />
                <path d={`M${i * 3} ${10 - i}h2V13h-2z`} fill="#104a60" />
              </g>
            ))}
          </svg>
          8599/7 kb
        </StatusCell>
      </StatusBar>

      <Panel>
        <Launchers>
          <Launcher aria-label="Меню приложений"><Icon name="mint" size={22} /></Launcher>
          <Launcher aria-label="Рабочий стол"><Icon name="desktop" size={20} /></Launcher>
          <Launcher aria-label="Файлы"><Icon name="drawer" size={22} /></Launcher>
        </Launchers>
        <Tasks>
          <Task><Icon name="drawer" size={22} /><TaskName>Presets — Dolphin</TaskName></Task>
          <Task><Icon name="chrome" size={22} /><TaskName>[Гибрид] 5 in 1 - Индикаторы -</TaskName></Task>
          <Task $active>
            <AlpariIcon>
              <svg width="22" height="12" viewBox="0 0 22 12" fill="none" strokeWidth="1.300" strokeDasharray="2 1">
                <path d="M1 6Q11-4 21 6" stroke="#f08060" />
                <path d="M1 8.500Q11-1.500 21 8.500" stroke="#f0a850" />
                <path d="M1 11Q11 1 21 11" stroke="#d8c858" />
                <path d="M2 13Q11 4 20 13" stroke="#88c060" />
              </svg>
              alpari
            </AlpariIcon>
            <TaskName>7793198: Alpari-Demo - Демо С</TaskName>
          </Task>
          <Task><Icon name="editor" size={22} /><TaskName>/home/yuriy/Загрузки/GBPNZD</TaskName></Task>
        </Tasks>
        <Tray>
          <Icon name="shield" size={20} />
          <svg width="20" height="13"><path d="M0 0h20v5H0z" fill="#fff" /><path d="M0 4h20v5H0z" fill="#00109a" /><path d="M0 9h20v4H0z" fill="#f00" /></svg>
          <Icon name="volume" size={20} />
          <Icon name="device" size={20} />
          <Icon name="screen" size={20} />
          <Icon name="up" size={18} />
          <Clock>17:22</Clock>
          <Today>28.12.15</Today>
          <svg width="20" height="31"><circle cx="17" cy="15" r="16" fill="#a8aaac" /><path d="M17 9q-8-2-10 3 0 5 5 4l6-1M7 18q2 5 11 4" stroke="#d8dadc" strokeWidth="2" fill="none" /></svg>
        </Tray>
      </Panel>
    </Screen>
  );
}
